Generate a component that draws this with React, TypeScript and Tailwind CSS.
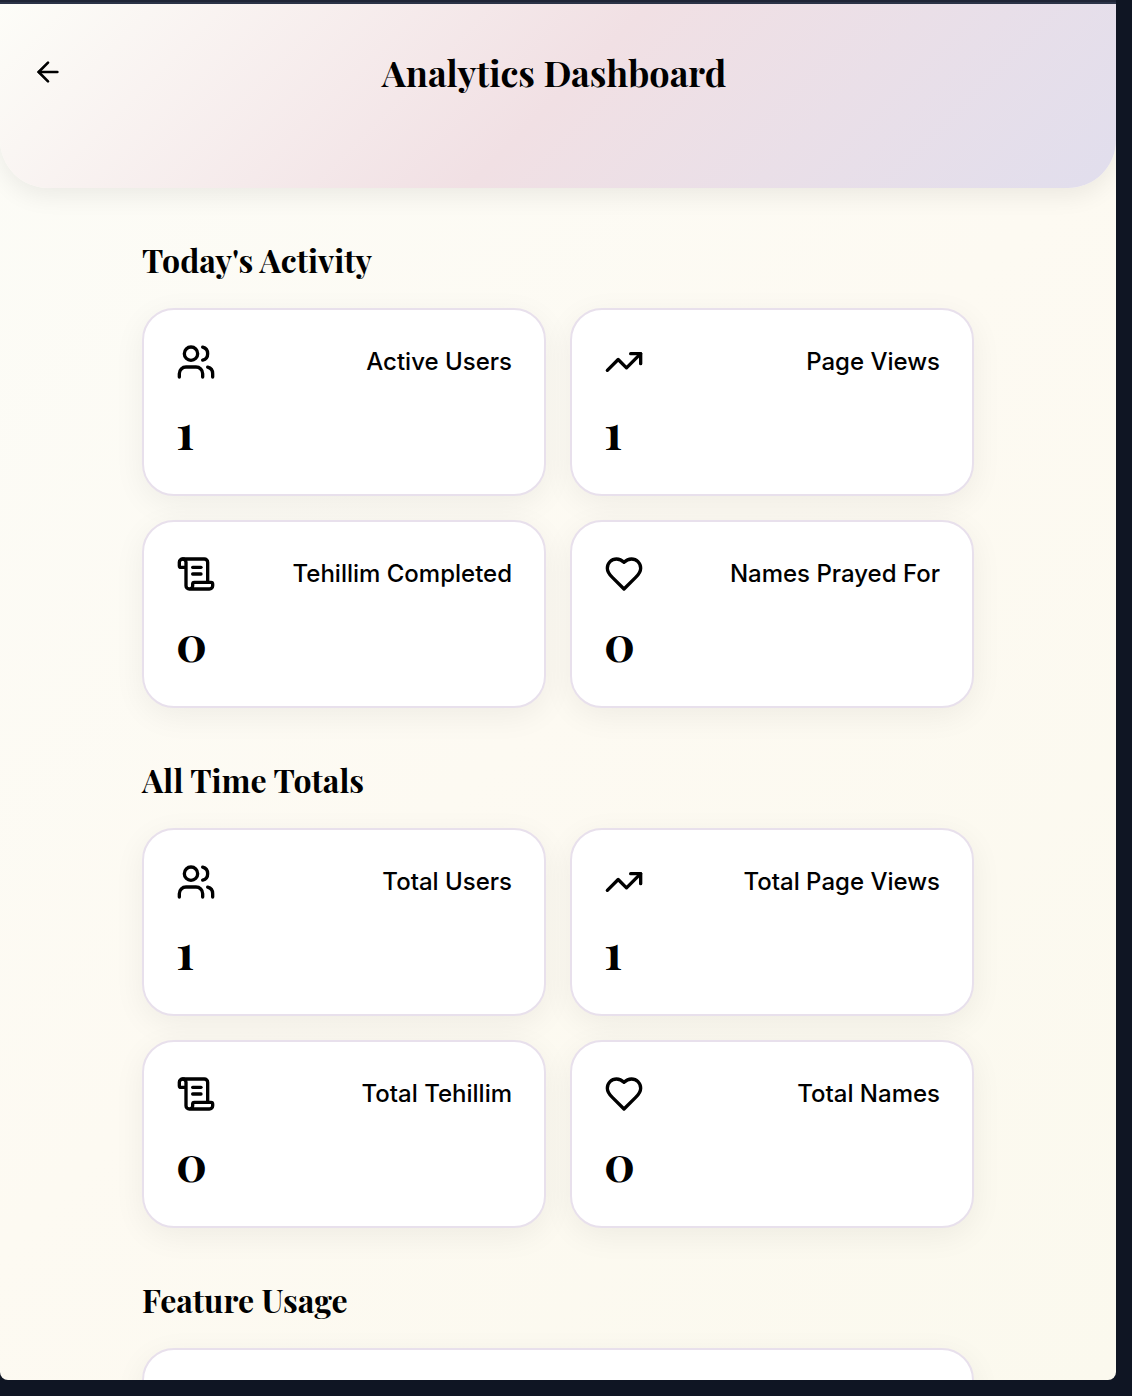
import type { ComponentType } from "react";
import { ArrowLeft, ScrollText, TrendingUp, Users } from "lucide-react";

type IconProps = { size?: number; strokeWidth?: number };
type Stat = { icon: ComponentType<IconProps>; label: string; value: number };

function Heart({ size = 24, strokeWidth = 2 }: IconProps) {
  return (
    <svg
      width={size}
      height={size}
      viewBox="0 0 24 24"
      fill="none"
      stroke="currentColor"
      strokeWidth={strokeWidth}
      strokeLinecap="round"
      strokeLinejoin="round"
    >
      <path d="M19 14c1.49-1.46 3-3.21 3-5.5A5.5 5.5 0 0 0 16.5 3c-1.76 0-3 .5-4.5 2-1.5-1.5-2.74-2-4.5-2A5.5 5.5 0 0 0 2 8.5c0 2.3 1.5 4.05 3 5.5l7 7Z" />
    </svg>
  );
}

const today: Stat[] = [
  { icon: Users, label: "Active Users", value: 1 },
  { icon: TrendingUp, label: "Page Views", value: 1 },
  { icon: ScrollText, label: "Tehillim Completed", value: 0 },
  { icon: Heart, label: "Names Prayed For", value: 0 },
];

const totals: Stat[] = [
  { icon: Users, label: "Total Users", value: 1 },
  { icon: TrendingUp, label: "Total Page Views", value: 1 },
  { icon: ScrollText, label: "Total Tehillim", value: 0 },
  { icon: Heart, label: "Total Names", value: 0 },
];

const serif = "font-['Playfair_Display','Liberation_Serif',serif] font-bold";
const cardStyle =
  "rounded-[32px] border-2 border-[#e8e0ec] bg-white shadow-[0_8px_32px_rgba(0,0,0,0.06)]";

function StatCard({ icon: Icon, label, value }: Stat) {
  return (
    <div className={`${cardStyle} h-[188px] p-8`}>
      <div className="flex h-10 items-center justify-between">
        <Icon size={40} strokeWidth={2} />
        <span className="whitespace-nowrap text-2xl font-medium">{label}</span>
      </div>
      <div className={`${serif} mt-4 text-[48px] leading-[64px]`}>{value}</div>
    </div>
  );
}

function Heading({ children }: { children: string }) {
  return (
    <h2 className={`${serif} mb-6 h-12 whitespace-nowrap text-[32px] leading-[48px]`}>
      {children}
    </h2>
  );
}

function StatSection({ title, stats }: { title: string; stats: Stat[] }) {
  return (
    <section>
      <Heading>{title}</Heading>
      <div className="grid grid-cols-2 gap-6">
        {stats.map((s) => (
          <StatCard key={s.label} {...s} />
        ))}
      </div>
    </section>
  );
}

export default function App() {
  return (
    <div className="h-[1396px] w-[1132px] overflow-hidden bg-[#0f1523] font-['Inter',sans-serif] text-black">
      <div className="h-1 w-[1116px] border-b-2 border-[#2b3347] bg-[#1f2536]" />
      <div className="h-[1376px] w-[1116px] overflow-hidden rounded-b-lg bg-[linear-gradient(135deg,#fcfcf7_0%,#fdfaf2_50%,#fbf9ee_100%)]">
        <header className="flex h-[184px] items-start rounded-b-[48px] bg-[linear-gradient(135deg,#fdfdf8_0%,#f1e0e4_50%,#e1deed_100%)] px-8 pt-[52px] shadow-[0_8px_24px_rgba(0,0,0,0.07)]">
          <button className="flex size-8 items-center justify-center" aria-label="Back">
            <ArrowLeft size={32} strokeWidth={2} />
          </button>
          <h1 className={`${serif} flex-1 pr-10 text-center text-[36px] leading-8`}>
            Analytics Dashboard
          </h1>
        </header>
        <main className="mx-auto flex w-[832px] flex-col gap-12 pt-12">
          <StatSection title="Today's Activity" stats={today} />
          <StatSection title="All Time Totals" stats={totals} />
          <section>
            <Heading>Feature Usage</Heading>
            <div className={`${cardStyle} h-[188px]`} />
          </section>
        </main>
      </div>
    </div>
  );
}
